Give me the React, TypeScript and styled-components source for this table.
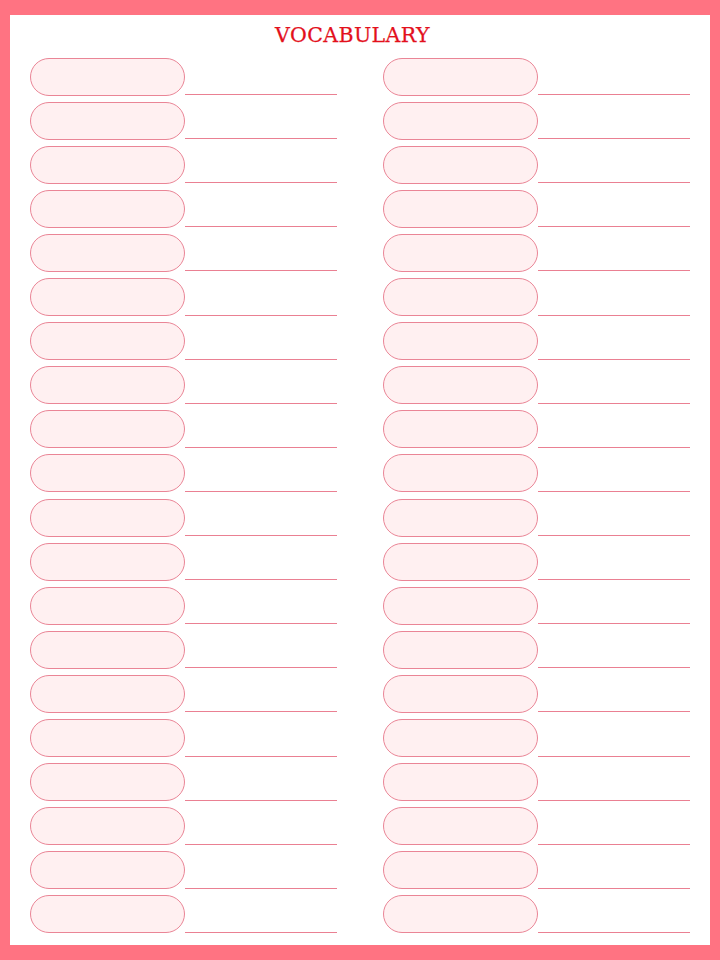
import React from "react";
import styled, { createGlobalStyle } from "styled-components";

const GlobalStyle = createGlobalStyle`
  html, body {
    margin: 0;
    padding: 0;
    background: #ff7382;
  }
  * { box-sizing: border-box; }
`;

const Frame = styled.div`
  width: 720px;
  height: 960px;
  padding: 15px 10px;
  background: #ff7382;
`;

const Sheet = styled.div`
  width: 700px;
  height: 930px;
  background: #ffffff;
  padding: 6px 20px 0 20px;
  display: flex;
  flex-direction: column;
`;

const Title = styled.h1`
  margin: 0 0 8.6px 0;
  padding-right: 15px;
  height: 28px;
  line-height: 28px;
  text-align: center;
  font-family: "DejaVu Serif", "Liberation Serif", serif;
  font-size: 20.5px;
  font-weight: 400;
  letter-spacing: 0.4px;
  color: #e3101c;
  -webkit-text-stroke: 0.25px #e3101c;
`;

const Grid = styled.div`
  display: grid;
  grid-template-columns: 307px 307px;
  column-gap: 46px;
  row-gap: 6.1px;
  grid-auto-flow: column;
  grid-template-rows: repeat(20, 38px);
`;

const Row = styled.div`
  display: flex;
  align-items: flex-end;
  height: 38px;
`;

const Pill = styled.div`
  width: 155px;
  height: 38px;
  border: 1px solid #ea8596;
  border-radius: 19px;
  background: #fff0f1;
  flex: none;
`;

const Rule = styled.div`
  flex: 1;
  height: 1px;
  margin-bottom: 0.5px;
  background: #ea8092;
`;

export default function App() {
  const rows = Array.from({ length: 40 }, (_, i) => i);
  return (
    <>
      <GlobalStyle />
      <Frame>
        <Sheet>
          <Title>VOCABULARY</Title>
          <Grid>
            {rows.map((i) => (
              <Row key={i}>
                <Pill />
                <Rule />
              </Row>
            ))}
          </Grid>
        </Sheet>
      </Frame>
    </>
  );
}
